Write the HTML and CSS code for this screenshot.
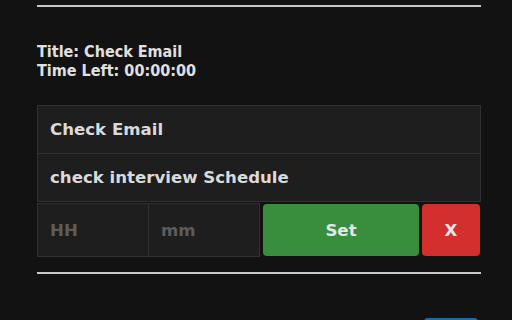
FILE: index.html
```html
<!DOCTYPE html>
<html lang="en">
<head>
    <meta charset="UTF-8">
    <meta name="viewport" content="width=device-width, initial-scale=1.0">
    <title>Task Timer</title>
    <link rel="stylesheet" href="styles.css">
</head>
<body>
    <div class="panel">
        <hr class="line">

        <!-- current task -->
        <div class="status">
            <div>Title: Check Email</div>
            <div>Time Left: 00:00:00</div>
        </div>

        <!-- task list -->
        <div class="tasks">
            <div class="task">Check Email</div>
            <div class="task">check interview Schedule</div>
        </div>

        <div class="timer-row">
            <input class="time-input" type="text" placeholder="HH">
            <input class="time-input" type="text" placeholder="mm">
            <button class="btn btn-set">Set</button>
            <button class="btn btn-remove">X</button>
        </div>

        <hr class="line line-bottom">

        <div class="footer">
            <button class="btn btn-add"></button>
        </div>
    </div>
</body>
</html>
```

FILE: styles.css
```css
body {
    margin: 0;
    background-color: #121212;
    color: #dcdcdc;
    font-family: 'DejaVu Sans', sans-serif;
}

.panel {
    padding: 5px 31px 0 37px;
}

.line {
    border: none;
    height: 2px;
    background-color: #c8c8c8;
    margin: 0;
}

.line-bottom {
    margin-top: 15px;
}

.status {
    margin-top: 35px;
    font-family: 'DejaVu Sans Condensed', 'DejaVu Sans', sans-serif;
    font-size: 16px;
    font-weight: bold;
    line-height: 19px;
    color: #e0e0e0;
}

.tasks {
    margin-top: 25px;
}

.task {
    box-sizing: border-box;
    height: 49px;
    border: 1px solid #303030;
    background-color: #1e1e1e;
    padding: 0 12px;
    display: flex;
    align-items: center;
    font-size: 16.6px;
    font-weight: bold;
    color: #dadada;
}

.task + .task {
    margin-top: -1px;
}

.timer-row {
    display: flex;
    align-items: center;
    margin-top: 1px;
    height: 54px;
}

.time-input {
    box-sizing: border-box;
    width: 112px;
    height: 54px;
    border: 1px solid #303030;
    background-color: #1e1e1e;
    padding: 0 12px;
    margin: 0;
    font-family: 'DejaVu Sans', sans-serif;
    font-size: 16.6px;
    font-weight: bold;
    color: #dadada;
    outline: none;
}

.time-input + .time-input {
    margin-left: -1px;
}

.time-input::placeholder {
    color: #5c5c5c;
}

.btn {
    border: none;
    border-radius: 4px;
    height: 52px;
    font-family: 'DejaVu Sans', sans-serif;
    font-size: 16.6px;
    font-weight: bold;
    color: #e6e6e6;
    cursor: pointer;
}

.btn-set {
    width: 156px;
    margin-left: 3px;
    background-color: #388e3c;
}

.btn-remove {
    width: 58px;
    margin-left: 3px;
    background-color: #d32f2f;
}

.footer {
    display: flex;
    justify-content: flex-end;
    margin-top: 44px;
    padding-right: 3px;
}

.btn-add {
    width: 54px;
    height: 40px;
    background-color: #1e6ab0;
}
```
